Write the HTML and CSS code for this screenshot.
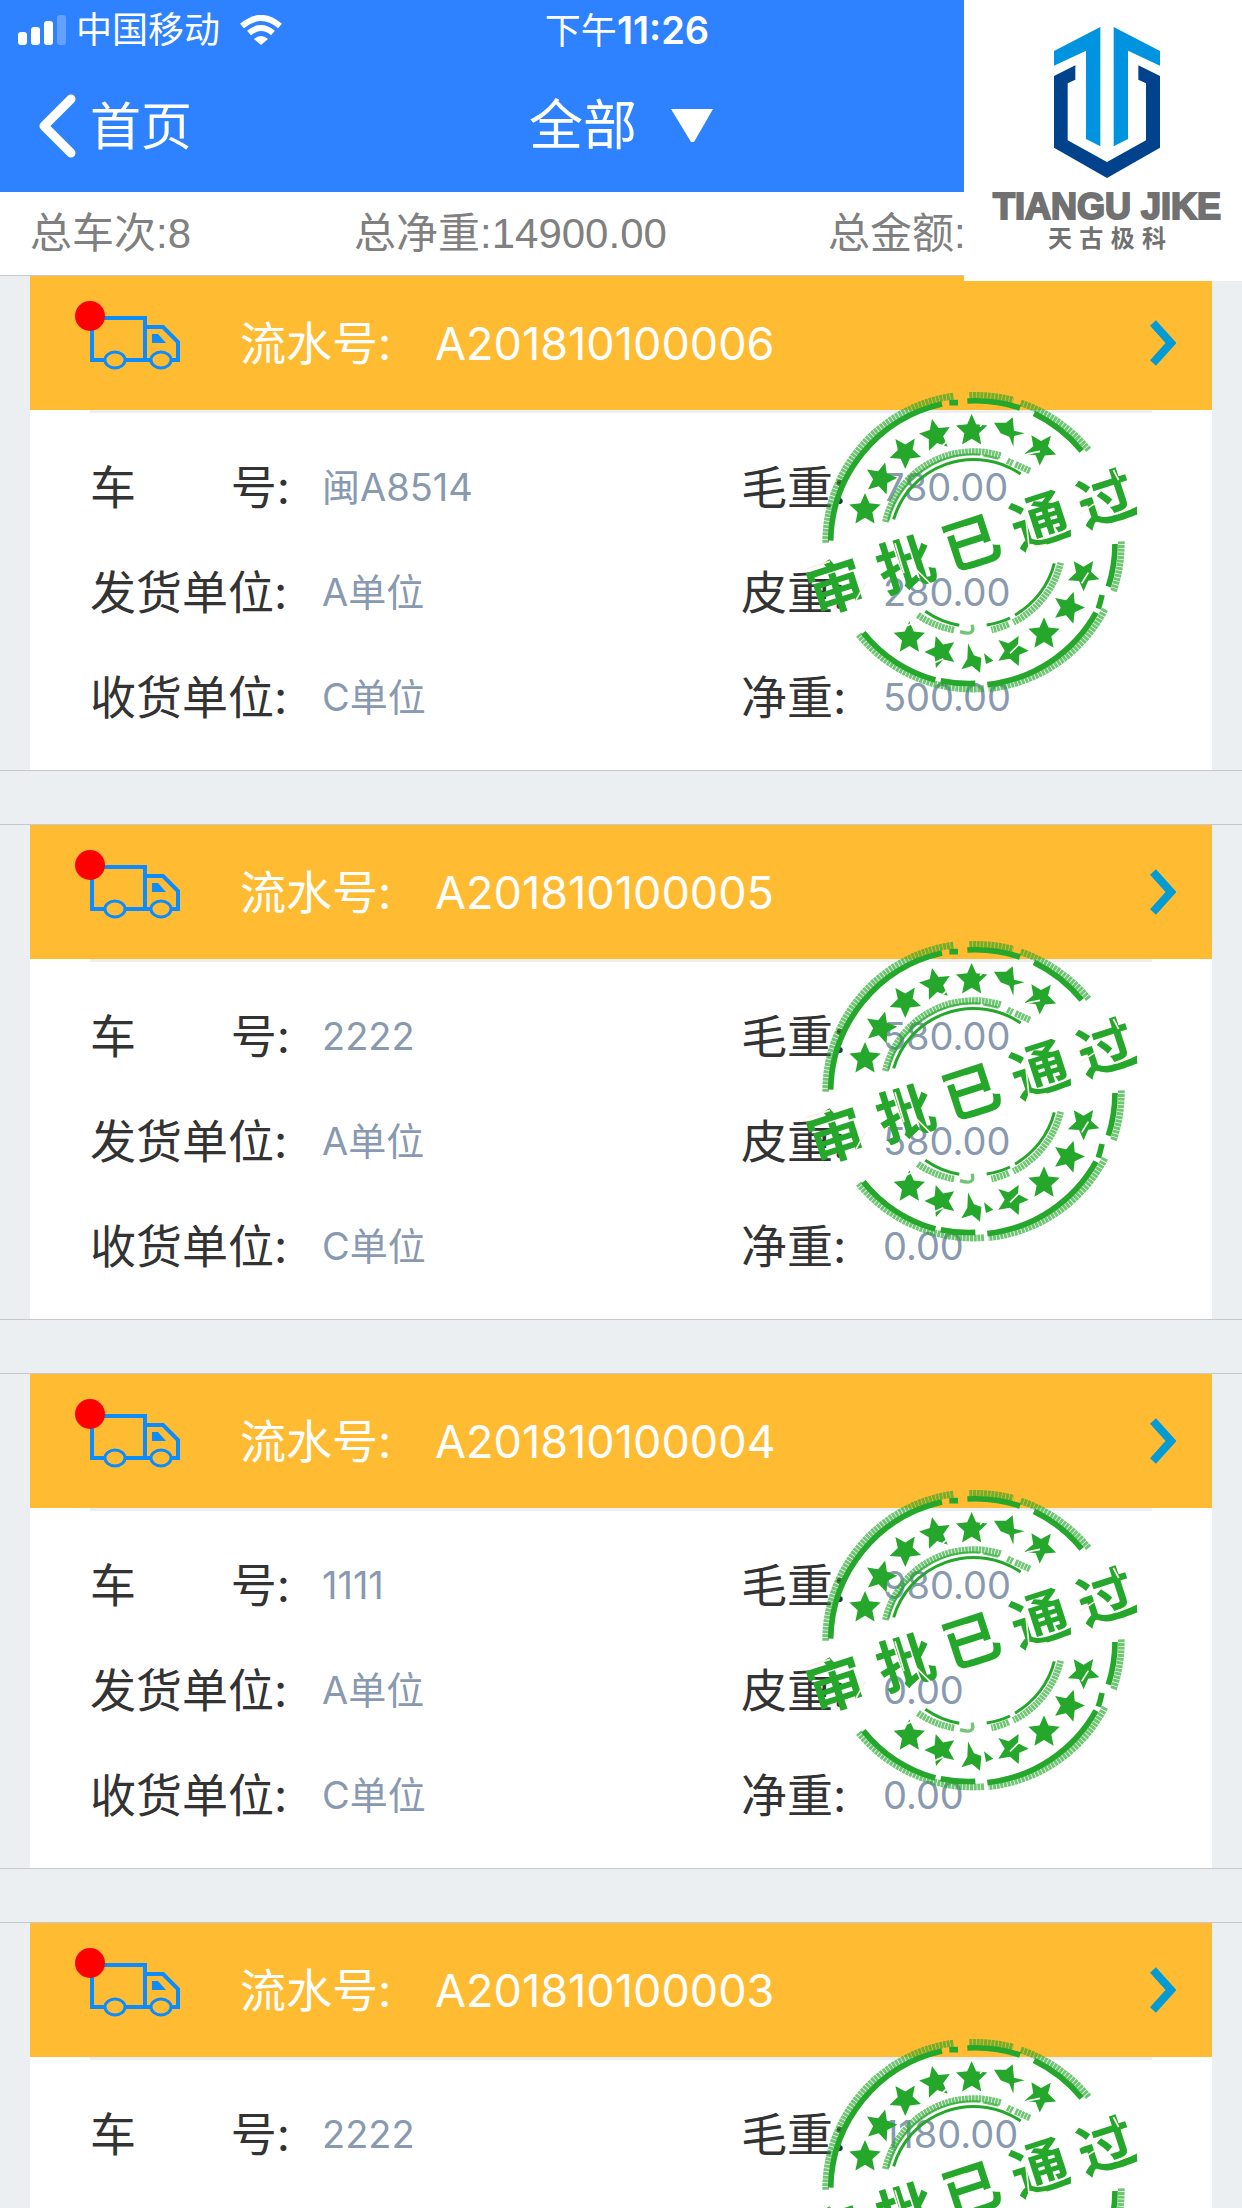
FILE: index.html
```
<!DOCTYPE html>
<html lang="zh-CN">
<head>
    <meta charset="UTF-8">
    <meta name="viewport" content="width=device-width, initial-scale=1.0">
    <title>全部</title>
    <link rel="stylesheet" href="styles.css">
</head>
<body>
    <!-- Shared drawings -->
    <svg class="sprite" aria-hidden="true">
        <symbol id="truck" viewBox="0 0 90 56">
            <g fill="none" stroke="#0b8cff" stroke-width="4">
                <path d="M15 45H2V3H55V45H35M55 12H73L88 27V45H81M55 45H60" />
                <ellipse cx="25" cy="45" rx="10" ry="8" stroke-width="3" />
                <ellipse cx="71" cy="45" rx="10" ry="8" stroke-width="3" />
            </g>
            <path fill="#0b8cff" d="M62 19H68L76 28H62Z" />
        </symbol>

        <symbol id="arrow" viewBox="0 0 26 46">
            <path d="M3 3L21 23L3 43" fill="none" stroke="#039bd3" stroke-width="8" />
        </symbol>

        <symbol id="star" viewBox="-50 -50 100 100">
            <path d="M0 -50L14 -18L49 -14L23 10L30 45L0 27L-30 45L-23 10L-49 -14L-14 -18Z" />
        </symbol>

        <symbol id="stamp" viewBox="0 0 1200 1020">
            <g fill="none" stroke="#25a72b">
                <!-- outer ring -->
                <path stroke-width="17" d="M152 512A428 428 0 0 1 486 102M508 98L534 98M562 93A428 428 0 0 1 720 114M762 130A428 428 0 0 1 905 243M1005 522A428 428 0 0 1 985 650M966 675A428 428 0 0 1 955 716M948 728A428 428 0 0 1 622 944M586 940A428 428 0 0 1 482 932M466 930A428 428 0 0 1 250 788" />
                <path stroke-width="20" stroke-dasharray="9 2" opacity=".65" d="M137 518A443 443 0 0 1 522 78M568 76A443 443 0 0 1 700 91M722 99A443 443 0 0 1 926 240M1024 514A443 443 0 0 1 1000 665M975 718A443 443 0 0 1 625 956M612 956A443 443 0 0 1 236 794" />
                <!-- inner ring -->
                <path stroke-width="9" d="M341 448A250 250 0 0 1 722 312M823 580A250 250 0 0 1 705 735M690 744A250 250 0 0 1 620 765M538 766A250 250 0 0 1 436 724" />
                <path stroke-width="7" opacity=".7" d="M325 452A264 264 0 0 1 600 254M610 256L655 266" />
                <path stroke-width="20" stroke-dasharray="8 2" opacity=".65" d="M316 456A272 272 0 0 1 662 257M682 272L698 280M706 283L750 303M842 578A270 270 0 0 1 700 757M686 762A270 270 0 0 1 634 780M522 780A270 270 0 0 1 412 734" />
                <path stroke-width="10" opacity=".65" d="M576 764Q588 800 540 785" />
            </g>
            <g fill="#25a72b">
                <use href="#star" x="-48" y="-48" width="96" height="96" transform="translate(255 417)" />
                <use href="#star" x="-48" y="-48" width="96" height="96" transform="translate(303 324) rotate(15)" />
                <use href="#star" x="-48" y="-48" width="96" height="96" transform="translate(377 245) rotate(35)" />
                <use href="#star" x="-48" y="-48" width="96" height="96" transform="translate(466 194) rotate(-12)" />
                <use href="#star" x="-48" y="-48" width="96" height="96" transform="translate(575 180)" />
                <path d="M642 158L678 158L698 142L702 182L734 190L702 198L700 230L688 200L662 190Z" />
                <use href="#star" x="-48" y="-48" width="96" height="96" transform="translate(783 235) rotate(38)" />
                <use href="#star" x="-48" y="-48" width="96" height="96" transform="translate(912 612) rotate(35)" />
                <use href="#star" x="-48" y="-48" width="96" height="96" transform="translate(866 711) rotate(18)" />
                <use href="#star" x="-48" y="-48" width="96" height="96" transform="translate(792 790)" />
                <path d="M655 810L686 820L716 798L714 826L746 842L718 854L716 888L690 866L655 872L674 842Z" />
                <path d="M564 820L582 856L604 864L600 908L576 888L544 898L562 866ZM612 850L640 872L618 882Z" />
                <use href="#star" x="-48" y="-48" width="96" height="96" transform="translate(482 844) rotate(-18)" />
                <use href="#star" x="-48" y="-48" width="96" height="96" transform="translate(388 802)" />
            </g>
            <!-- worn spots -->
            <g fill="none" stroke="#fff" stroke-width="5">
                <path d="M488 226L512 204M600 170L618 148M740 252L780 244M905 640L925 608M690 850L725 815M455 882L490 866M375 770L405 756" />
            </g>
            <g transform="translate(165 655) rotate(-18)">
                <text class="stamp-text" x="-82 138 345 560 770" y="60">审批已通过</text>
            </g>
            <g fill="none" stroke="#fbf1e6" stroke-width="5">
                <path d="M80 596L150 574M228 690L256 640M345 520L372 610M410 600L450 640M496 490L560 470M735 420L748 540M762 530L800 524M888 400L930 372M900 430L945 400M1000 300L1016 330M1010 432L1060 410" />
            </g>
        </symbol>
    </svg>

    <header class="top">
        <div class="status-bar">
            <div class="carrier">
                <svg width="48" height="30" viewBox="0 0 48 30" fill="#fff">
                    <rect x="0" y="17" width="9" height="13" rx="3" />
                    <rect x="13" y="12" width="9" height="18" rx="3" />
                    <rect x="26" y="6" width="9" height="24" rx="3" />
                    <rect x="39" y="0" width="9" height="30" rx="3" opacity=".25" />
                </svg>
                <span>中国移动</span>
                <svg class="wifi" width="42" height="30" viewBox="0 0 42 30" fill="none" stroke="#fff" stroke-width="6">
                    <path d="M2 11Q21 -5 40 11" />
                    <path d="M9 18Q21 8 33 18" />
                    <path d="M14 24Q21 18 28 24L21 30Z" fill="#fff" stroke="none" />
                </svg>
            </div>
            <div class="time">下午<b>11:26</b></div>
        </div>
        <nav class="nav-bar">
            <a class="back" href="#">
                <svg width="38" height="64" viewBox="0 0 38 64">
                    <path d="M33 5L6 32L33 59" fill="none" stroke="#fff" stroke-width="9" stroke-linecap="round" stroke-linejoin="round" />
                </svg>
                首页
            </a>
            <button class="filter" type="button">
                全部
                <svg width="42" height="34" viewBox="0 0 42 34"><path d="M0 0H42L23 33H20Z" fill="#fff" /></svg>
            </button>
        </nav>
    </header>

    <div class="summary">
        <span>总车次:8</span>
        <span>总净重:14900.00</span>
        <span>总金额:</span>
    </div>

    <main id="orderList"></main>

    <div class="logo">
        <svg width="106" height="152" viewBox="0 0 318 456">
            <path fill="#0093df" d="M0 72L139 0V358L96 336V71L0 116ZM179 0L318 72V116L222 71V336L179 358Z" />
            <path fill="#00428c" d="M0 147L64 115V158L41 169V340L159 405L276 340V169L253 158V115L318 147V362L159 453L0 362Z" />
        </svg>
        <strong>TIANGU JIKE</strong>
        <span>天古极科</span>
    </div>

    <script>
        const orders = [
            { no: 'A201810100006', car: '闽A8514', from: 'A单位', to: 'C单位', gross: '780.00', tare: '280.00', net: '500.00' },
            { no: 'A201810100005', car: '2222', from: 'A单位', to: 'C单位', gross: '580.00', tare: '580.00', net: '0.00' },
            { no: 'A201810100004', car: '1111', from: 'A单位', to: 'C单位', gross: '980.00', tare: '0.00', net: '0.00' },
            { no: 'A201810100003', car: '2222', from: 'A单位', to: 'C单位', gross: '1180.00', tare: '0.00', net: '1180.00' }
        ];

        document.getElementById('orderList').innerHTML = orders.map(order => `
            <section class="order">
                <a class="order-head" href="#">
                    <span class="truck"><svg width="90" height="56"><use href="#truck" /></svg></span>
                    <span class="order-label">流水号:</span>
                    <span class="order-no">${order.no}</span>
                    <svg class="arrow" width="26" height="46"><use href="#arrow" /></svg>
                </a>
                <dl class="order-body">
                    <div><dt class="wide"><span>车</span><span>号:</span></dt><dd>${order.car}</dd></div>
                    <div><dt>毛重:</dt><dd>${order.gross}</dd></div>
                    <div><dt class="wide">发货单位:</dt><dd>${order.from}</dd></div>
                    <div><dt>皮重:</dt><dd>${order.tare}</dd></div>
                    <div><dt class="wide">收货单位:</dt><dd>${order.to}</dd></div>
                    <div><dt>净重:</dt><dd>${order.net}</dd></div>
                </dl>
                <svg class="stamp" width="400" height="340"><use href="#stamp" /></svg>
            </section>
        `).join('');
    </script>
</body>
</html>
```
FILE: styles.css
```
* {
    box-sizing: border-box;
}

body {
    margin: 0;
    position: relative;
    background: #ebeff2;
    font-family: Inter, "Noto Sans CJK SC", sans-serif;
    line-height: 1;
}

a {
    color: inherit;
    text-decoration: none;
}

.sprite {
    position: absolute;
    width: 0;
    height: 0;
}

/* Header */
.top {
    background: #2e82ff;
    color: #fff;
}

.status-bar,
.nav-bar {
    display: grid;
    grid-template-columns: 1fr auto 1fr;
    align-items: center;
}

.status-bar {
    height: 60px;
    padding: 0 6px 0 18px;
    font-size: 36px;
}

.carrier {
    display: flex;
    align-items: center;
    gap: 10px;
}

.wifi {
    margin-left: 10px;
}

.time b {
    font-size: 38px;
    font-weight: 600;
}

.nav-bar {
    height: 132px;
    padding: 0 38px;
}

.back {
    display: flex;
    align-items: center;
    gap: 14px;
    font-size: 51px;
}

.filter {
    display: flex;
    align-items: center;
    gap: 34px;
    padding: 0;
    border: none;
    background: none;
    color: inherit;
    font: inherit;
    font-size: 54px;
}

/* Totals */
.summary {
    display: grid;
    grid-template-columns: 54fr 79fr 69fr;
    align-items: center;
    height: 83px;
    padding-left: 30px;
    background: #fff;
    color: #808080;
    font-family: "Liberation Sans", "Noto Sans CJK SC", sans-serif;
    font-size: 42px;
}

/* Orders */
.order {
    position: relative;
    margin-bottom: 53px;
    padding: 0 30px;
    border-top: 1px solid #c8c7cc;
    border-bottom: 1px solid #c8c7cc;
}

.order-head {
    display: flex;
    align-items: center;
    height: 134px;
    padding: 0 36px 0 60px;
    background: #ffbc32;
    color: #fff;
    font-size: 45px;
}

.truck {
    position: relative;
    display: flex;
    margin-right: 60px;
}

.truck::before {
    content: "";
    position: absolute;
    left: -15px;
    top: -14px;
    width: 30px;
    height: 30px;
    border-radius: 50%;
    background: #f00;
}

.order-label {
    width: 195px;
    font-size: 46px;
}

.arrow {
    margin-left: auto;
}

/* The thin line under the head is inset 60px on both sides */
.order-body {
    display: grid;
    grid-template-columns: 19fr 12fr;
    margin: 0;
    padding: 24px 60px 21px;
    background: linear-gradient(#ebeff2, #ebeff2) center top / calc(100% - 120px) 3px no-repeat #fff;
}

.order-body div {
    display: flex;
    align-items: center;
    height: 105px;
}

.order-body dt {
    width: 142px;
    color: #333;
    font-size: 46px;
}

.order-body .wide {
    display: flex;
    justify-content: space-between;
    width: 232px;
    padding-right: 32px;
}

.order-body dd {
    margin: 0;
    color: #8899b0;
    font-size: 38px;
}

.stamp {
    position: absolute;
    top: 94px;
    right: 62px;
    pointer-events: none;
}

.stamp-text {
    fill: #25a72b;
    font-family: "Noto Sans CJK SC", sans-serif;
    font-size: 172px;
    font-weight: 700;
}

/* Company logo */
.logo {
    position: absolute;
    top: 0;
    right: 0;
    display: flex;
    flex-direction: column;
    align-items: center;
    width: 278px;
    height: 281px;
    padding: 27px 0 0 8px;
    background: #fff;
    color: #727171;
}

.logo strong {
    margin-top: 8px;
    font-family: "Liberation Sans", sans-serif;
    font-size: 36px;
    line-height: 40px;
    -webkit-text-stroke: 2px #727171;
}

.logo span {
    width: 118px;
    font-size: 24px;
    font-weight: 700;
    line-height: 24px;
    text-align: justify;
    text-align-last: justify;
}
```
